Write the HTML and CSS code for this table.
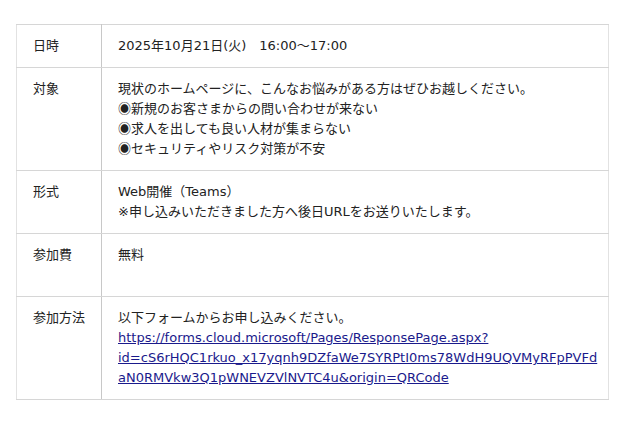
FILE: index.html
```html
<!DOCTYPE html>
<html lang="ja">
<head>
<meta charset="utf-8">
<link rel="stylesheet" href="styles.css">
</head>
<body>
<table class="info">
  <tr>
    <th>日時</th>
    <td>2025年10月21日(火)　16:00～17:00</td>
  </tr>
  <tr>
    <th>対象</th>
    <td>現状のホームページに、こんなお悩みがある方はぜひお越しください。<br><span class="mark">◉</span>新規のお客さまからの問い合わせが来ない<br><span class="mark">◉</span>求人を出しても良い人材が集まらない<br><span class="mark">◉</span>セキュリティやリスク対策が不安</td>
  </tr>
  <tr>
    <th>形式</th>
    <td>Web開催（Teams）<br>※申し込みいただきました方へ後日URLをお送りいたします。</td>
  </tr>
  <tr>
    <th>参加費</th>
    <td>無料<br>&nbsp;</td>
  </tr>
  <tr>
    <th>参加方法</th>
    <td>以下フォームからお申し込みください。<br><a class="link" href="#">https://forms.cloud.microsoft/Pages/ResponsePage.aspx?<wbr>id=cS6rHQC1rkuo_x17yqnh9DZfaWe7SYRPtI0ms78WdH9UQVMyRFpPVFd<wbr>aN0RMVkw3Q1pWNEVZVlNVTC4u&amp;origin=QRCode</a></td>
  </tr>
</table>
</body>
</html>
```

FILE: styles.css
```css
html, body {
  margin: 0;
  background: #fff;
}
body {
  padding: 24px 31px 0 16px;
  font-family: "DejaVu Sans", "Noto Sans CJK JP", sans-serif;
  font-size: 13px;
  line-height: 20px;
  color: #222;
}
.info {
  width: 593px;
  border-collapse: collapse;
  border: 1px solid #e2e2e2;
}
.info th, .info td {
  border-top: 1px solid #d6d6d6;
  border-bottom: 1px solid #d6d6d6;
  padding: 11px 16px 11px;
  vertical-align: top;
  text-align: left;
  font-weight: normal;
}
.info th {
  width: 52px;
  border-right: 1px solid #c8c8c8;
}
.info td {
  padding-right: 8px;
  overflow-wrap: anywhere;
}
.mark {
  font-family: "Noto Sans CJK JP", sans-serif;
  line-height: 0;
}
.link {
  color: #1a1a8c;
  text-decoration: underline;
}
```
